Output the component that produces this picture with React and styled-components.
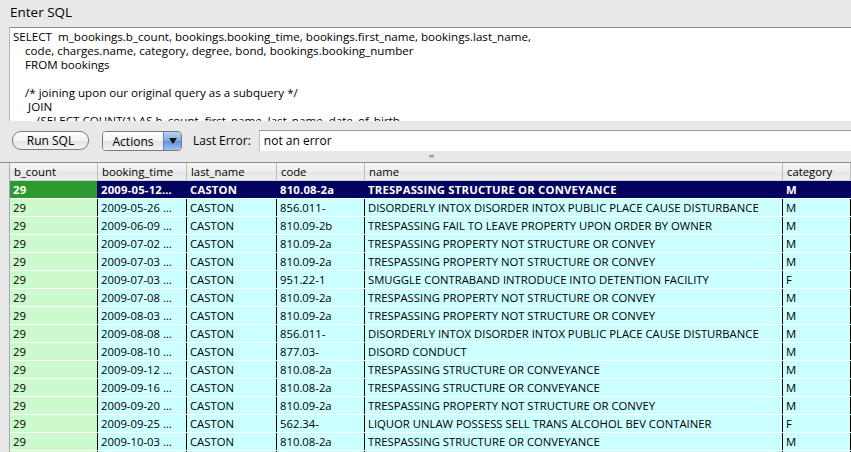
import React from "react";
import styled, { createGlobalStyle } from "styled-components";

const Global = createGlobalStyle`
  html, body { margin: 0; padding: 0; background: #e8e8e8; overflow: hidden; }
  * { box-sizing: border-box; }
`;

const FONT = `"Open Sans", "DejaVu Sans", sans-serif`;

const Window = styled.div`
  width: 851px;
  height: 452px;
  display: flex;
  flex-direction: column;
  background: #e8e8e8;
  font-family: ${FONT};
  color: #000;
  overflow: hidden;
  & > * { flex-shrink: 0; }
`;

const Title = styled.div`
  height: 27px;
  padding: 3px 0 0 10px;
  font-size: 13.5px;
  line-height: 18px;
`;

const SqlBox = styled.div`
  margin-left: 9px;
  height: 94px;
  background: #fff;
  border-top: 1px solid #8a8a8a;
  border-left: 1px solid #b5b5b5;
  padding: 2px 0 0 3px;
  font-size: 11.6px;
  line-height: 14px;
  white-space: pre;
  overflow: hidden;
`;

const Toolbar = styled.div`
  height: 31px;
  display: flex;
  align-items: flex-start;
  padding: 9px 0 0 12px;
`;

const PillButton = styled.div`
  width: 77px;
  height: 19px;
  margin-top: 1px;
  border: 1px solid #7a7a7a;
  border-radius: 9px;
  background: linear-gradient(#ffffff, #f2f2f2 50%, #e3e3e3 51%, #f4f4f4);
  font-size: 12px;
  line-height: 17px;
  text-align: center;
  margin-right: 13px;
`;

const PopupButton = styled.div`
  width: 80px;
  height: 20px;
  display: flex;
  border: 1px solid #7a7a7a;
  border-radius: 4px;
  overflow: hidden;
  margin-right: 11px;
  margin-top: 1px;
`;

const PopupLabel = styled.div`
  flex: 1;
  background: linear-gradient(#ffffff, #f2f2f2 50%, #e3e3e3 51%, #f4f4f4);
  font-size: 12px;
  line-height: 19px;
  text-align: center;
`;

const PopupArrow = styled.div`
  width: 18px;
  border-left: 1px solid #6a84a8;
  background: linear-gradient(#b9d4f3, #7fa9df 50%, #5b90d6 51%, #9cc4ef);
  display: flex;
  align-items: center;
  justify-content: center;
`;

const Label = styled.div`
  font-size: 12px;
  line-height: 21px;
  margin-right: 8px;
`;

const ErrorField = styled.div`
  flex: 1;
  height: 21px;
  background: #fff;
  border-top: 1px solid #9a9a9a;
  border-left: 1px solid #c0c0c0;
  font-size: 12px;
  line-height: 19px;
  padding-left: 4px;
`;

const Splitter = styled.div`
  height: 11px;
  display: flex;
  justify-content: center;
  align-items: center;
  border-bottom: 1px solid #8c8c8c;
`;

const Dimple = styled.div`
  width: 5px;
  height: 4px;
  margin-left: 12px;
  background: linear-gradient(#8a8470, #b9b3a0 50%, #cfd8de 51%);
`;

const Table = styled.div`
  margin-left: 9px;
  border-left: 1px solid #a8a8a8;
  display: flex;
  flex-direction: column;
  font-size: 11.3px;
`;

const cols = "88px 89px 90px 88px 418px 1fr";

const HeaderRow = styled.div`
  display: grid;
  grid-template-columns: ${cols};
  height: 18px;
  flex-shrink: 0;
  background: linear-gradient(#f7f7f7, #ededed 50%, #e4e4e4 51%, #eeeeee);
  border-bottom: 1px solid #c9d3df;
`;

const HeaderCell = styled.div`
  border-right: 1px solid #bdbdbd;
  padding-left: 4px;
  line-height: 18px;
  white-space: nowrap;
  overflow: hidden;
`;

const Row = styled.div`
  display: grid;
  grid-template-columns: ${cols};
  height: 18px;
  flex-shrink: 0;
  border-bottom: 1px solid #ffffff;
  font-weight: ${(p) => (p.$selected ? 700 : 400)};
  letter-spacing: ${(p) => (p.$selected ? "0.2px" : "0")};
  color: ${(p) => (p.$selected ? "#fff" : "#000")};
`;

const Cell = styled.div`
  background: ${(p) =>
    p.$selected
      ? p.$first
        ? "#2e992e"
        : "#03035f"
      : p.$first
      ? "#ccfacc"
      : "#ccffff"};
  border-right: 1px solid ${(p) => (p.$selected ? "#03035f" : "#000")};
  padding-left: 3px;
  line-height: 17px;
  white-space: nowrap;
  overflow: hidden;
`;

const headers = ["b_count", "booking_time", "last_name", "code", "name", "category"];

const rows = [
  ["2009-05-12…", "810.08-2a", "TRESPASSING STRUCTURE OR CONVEYANCE", "M"],
  ["2009-05-26 …", "856.011-", "DISORDERLY INTOX DISORDER INTOX PUBLIC PLACE CAUSE DISTURBANCE", "M"],
  ["2009-06-09 …", "810.09-2b", "TRESPASSING FAIL TO LEAVE PROPERTY UPON ORDER BY OWNER", "M"],
  ["2009-07-02 …", "810.09-2a", "TRESPASSING PROPERTY NOT STRUCTURE OR CONVEY", "M"],
  ["2009-07-03 …", "810.09-2a", "TRESPASSING PROPERTY NOT STRUCTURE OR CONVEY", "M"],
  ["2009-07-03 …", "951.22-1", "SMUGGLE CONTRABAND INTRODUCE INTO DETENTION FACILITY", "F"],
  ["2009-07-08 …", "810.09-2a", "TRESPASSING PROPERTY NOT STRUCTURE OR CONVEY", "M"],
  ["2009-08-03 …", "810.09-2a", "TRESPASSING PROPERTY NOT STRUCTURE OR CONVEY", "M"],
  ["2009-08-08 …", "856.011-", "DISORDERLY INTOX DISORDER INTOX PUBLIC PLACE CAUSE DISTURBANCE", "M"],
  ["2009-08-10 …", "877.03-", "DISORD CONDUCT", "M"],
  ["2009-09-12 …", "810.08-2a", "TRESPASSING STRUCTURE OR CONVEYANCE", "M"],
  ["2009-09-16 …", "810.08-2a", "TRESPASSING STRUCTURE OR CONVEYANCE", "M"],
  ["2009-09-20 …", "810.09-2a", "TRESPASSING PROPERTY NOT STRUCTURE OR CONVEY", "M"],
  ["2009-09-25 …", "562.34-", "LIQUOR UNLAW POSSESS SELL TRANS ALCOHOL BEV CONTAINER", "F"],
  ["2009-10-03 …", "810.08-2a", "TRESPASSING STRUCTURE OR CONVEYANCE", "M"],
  ["2009-10-10 …", "810.08-2a", "TRESPASSING STRUCTURE OR CONVEYANCE", "M"],
];

const sql = [
  "SELECT  m_bookings.b_count, bookings.booking_time, bookings.first_name, bookings.last_name,",
  "    code, charges.name, category, degree, bond, bookings.booking_number",
  "    FROM bookings",
  "",
  "    /* joining upon our original query as a subquery */",
  "     JOIN",
  "        (SELECT COUNT(1) AS b_count, first_name, last_name, date_of_birth",
].join("\n");

export default function App() {
  return (
    <Window>
      <Global />
      <Title>Enter SQL</Title>
      <SqlBox>{sql}</SqlBox>
      <Toolbar>
        <PillButton>Run SQL</PillButton>
        <PopupButton>
          <PopupLabel>Actions</PopupLabel>
          <PopupArrow>
            <svg width="8" height="6" viewBox="0 0 8 6">
              <path d="M0 0 L8 0 L4 6 Z" fill="#111" />
            </svg>
          </PopupArrow>
        </PopupButton>
        <Label>Last Error:</Label>
        <ErrorField>not an error</ErrorField>
      </Toolbar>
      <Splitter>
        <Dimple />
      </Splitter>
      <Table>
        <HeaderRow>
          {headers.map((h) => (
            <HeaderCell key={h}>{h}</HeaderCell>
          ))}
        </HeaderRow>
        {rows.map((r, i) => {
          const sel = i === 0;
          return (
            <Row key={i} $selected={sel}>
              <Cell $first $selected={sel}>29</Cell>
              <Cell $selected={sel}>{r[0]}</Cell>
              <Cell $selected={sel}>CASTON</Cell>
              <Cell $selected={sel}>{r[1]}</Cell>
              <Cell $selected={sel}>{r[2]}</Cell>
              <Cell $selected={sel}>{r[3]}</Cell>
            </Row>
          );
        })}
      </Table>
    </Window>
  );
}
